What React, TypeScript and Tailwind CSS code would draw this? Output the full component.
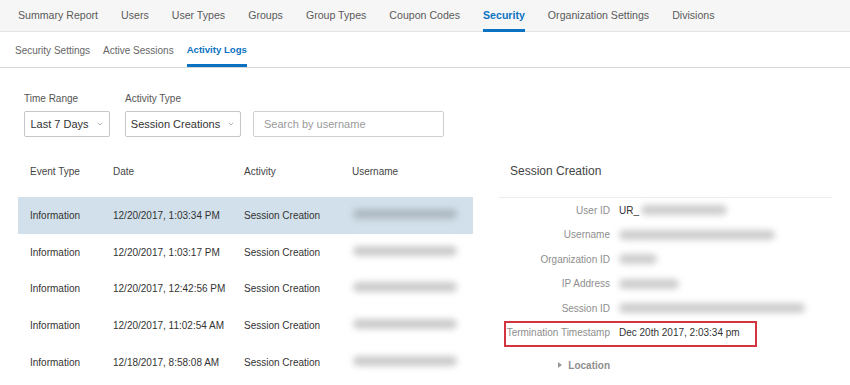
import { ChevronDown } from 'lucide-react'

const topTabs = [
  'Summary Report',
  'Users',
  'User Types',
  'Groups',
  'Group Types',
  'Coupon Codes',
  'Security',
  'Organization Settings',
  'Divisions',
]

const subTabs = ['Security Settings', 'Active Sessions', 'Activity Logs']

const rows = [
  { date: '12/20/2017, 1:03:34 PM', selected: true },
  { date: '12/20/2017, 1:03:17 PM' },
  { date: '12/20/2017, 12:42:56 PM' },
  { date: '12/20/2017, 11:02:54 AM' },
  { date: '12/18/2017, 8:58:08 AM' },
]

function Blur({ w }: { w: number }) {
  return (
    <span
      className="inline-block h-[10px] rounded-full blur-[3px] bg-[#cdcdcd]"
      style={{ width: w }}
    />
  )
}

function Select({ label, width }: { label: string; width: string }) {
  return (
    <div
      className={`${width} h-[26px] flex items-center justify-center gap-[7px] border border-[#c6c6c6] rounded-[2px] bg-white text-[11px] text-[#333]`}
    >
      <span>{label}</span>
      <ChevronDown size={8} strokeWidth={1.5} className="text-[#666]" />
    </div>
  )
}

export default function App() {
  const details: { label: string; value: React.ReactNode }[] = [
    {
      label: 'User ID',
      value: (
        <span className="flex items-center gap-[2px]">
          <span className="text-[#333]">UR_</span>
          <Blur w={86} />
        </span>
      ),
    },
    { label: 'Username', value: <Blur w={156} /> },
    { label: 'Organization ID', value: <Blur w={38} /> },
    { label: 'IP Address', value: <Blur w={60} /> },
    { label: 'Session ID', value: <Blur w={186} /> },
  ]

  return (
    <div className="w-[850px] h-[385px] overflow-hidden bg-white font-['Liberation_Sans',Arial,sans-serif]">
      {/* top tabs */}
      <div className="h-[32px] bg-[#f6f6f6] border-b border-[#e4e4e4] flex pl-[18px] gap-[23px]">
        {topTabs.map((t) => (
          <div
            key={t}
            className={`relative flex items-center text-[10.6px] ${
              t === 'Security' ? 'text-[#0b72c2] font-bold' : 'text-[#5a5a5a]'
            }`}
          >
            {t}
            {t === 'Security' && (
              <span className="absolute left-0 right-0 bottom-[-1px] h-[3px] bg-[#0b72c2]" />
            )}
          </div>
        ))}
      </div>

      {/* sub tabs */}
      <div className="h-[36px] border-b border-[#d6d6d6] flex pl-[15px] gap-[13px]">
        {subTabs.map((t) => (
          <div
            key={t}
            className={`relative flex items-center pt-[2px] ${
              t === 'Activity Logs' ? 'text-[9.6px] text-[#0b72c2] font-bold' : 'text-[10px] text-[#666]'
            }`}
          >
            {t}
            {t === 'Activity Logs' && (
              <span className="absolute left-0 right-0 bottom-0 h-[3px] bg-[#0b72c2]" />
            )}
          </div>
        ))}
      </div>

      {/* filters */}
      <div className="pl-[24px] pt-[24px] flex gap-[15px]">
        <div className="flex flex-col gap-[6px]">
          <span className="text-[10px] text-[#555] leading-[13px]">Time Range</span>
          <Select label="Last 7 Days" width="w-[86px]" />
        </div>
        <div className="flex flex-col gap-[6px]">
          <span className="text-[10px] text-[#555] leading-[13px]">Activity Type</span>
          <Select label="Session Creations" width="w-[116px]" />
        </div>
        <div className="flex flex-col gap-[6px] ml-[-3px]">
          <span className="leading-[13px]">&nbsp;</span>
          <div className="w-[191px] h-[26px] border border-[#cfcfcf] rounded-[2px] flex items-center pl-[10px] text-[11px] text-[#9a9a9a]">
            Search by username
          </div>
        </div>
      </div>

      {/* content */}
      <div className="flex pl-[18px]">
        <div className="w-[455px]">
          <div className="h-[60px] flex items-end pb-[18px] text-[10px] text-[#444] leading-[14px]">
            <span className="w-[95px] pl-[12px]">Event Type</span>
            <span className="w-[131px]">Date</span>
            <span className="w-[108px]">Activity</span>
            <span>Username</span>
          </div>
          {rows.map((r) => (
            <div
              key={r.date}
              className={`h-[36.75px] flex items-center text-[10px] text-[#333] ${
                r.selected ? 'bg-[#d1e0ea]' : ''
              }`}
            >
              <span className="w-[95px] pl-[12px]">Information</span>
              <span className="w-[131px]">{r.date}</span>
              <span className="w-[108px]">Session Creation</span>
              <span className="pl-[1px]">
                <span
                  className={`inline-block w-[104px] h-[10px] rounded-full blur-[3px] ${
                    r.selected ? 'bg-[#aeb9c2]' : 'bg-[#cbcbcb]'
                  }`}
                />
              </span>
            </div>
          ))}
        </div>

        <div className="ml-[26px] w-[333px]">
          <div className="h-[60px] flex items-end pb-[19px] pl-[11px] text-[12px] text-[#444] font-medium leading-[14px]">
            Session Creation
          </div>
          <div className="border-t border-[#ececec]">
            {details.map((d) => (
              <div key={d.label} className="h-[24.5px] flex items-center text-[10px]">
                <span className="w-[111px] text-right text-[#8e8e8e]">{d.label}</span>
                <span className="ml-[9px] flex items-center">{d.value}</span>
              </div>
            ))}
            <div className="relative h-[24.5px] flex items-center text-[10px]">
              <span className="w-[111px] text-right text-[#8e8e8e] whitespace-nowrap">
                Termination Timestamp
              </span>
              <span className="ml-[9px] text-[#333] font-medium">Dec 20th 2017, 2:03:34 pm</span>
              <span className="absolute left-[5px] top-[0.5px] w-[253px] h-[26px] border-2 border-[#d2353f]" />
            </div>
            <div className="mt-[13px] h-[14px] flex items-center text-[10px]">
              <span className="w-[111px] flex justify-end items-center gap-[6px] text-[#8e8e8e] font-bold">
                <span className="w-0 h-0 border-y-[3px] border-y-transparent border-l-[4px] border-l-[#999]" />
                Location
              </span>
            </div>
          </div>
        </div>
      </div>
    </div>
  )
}
